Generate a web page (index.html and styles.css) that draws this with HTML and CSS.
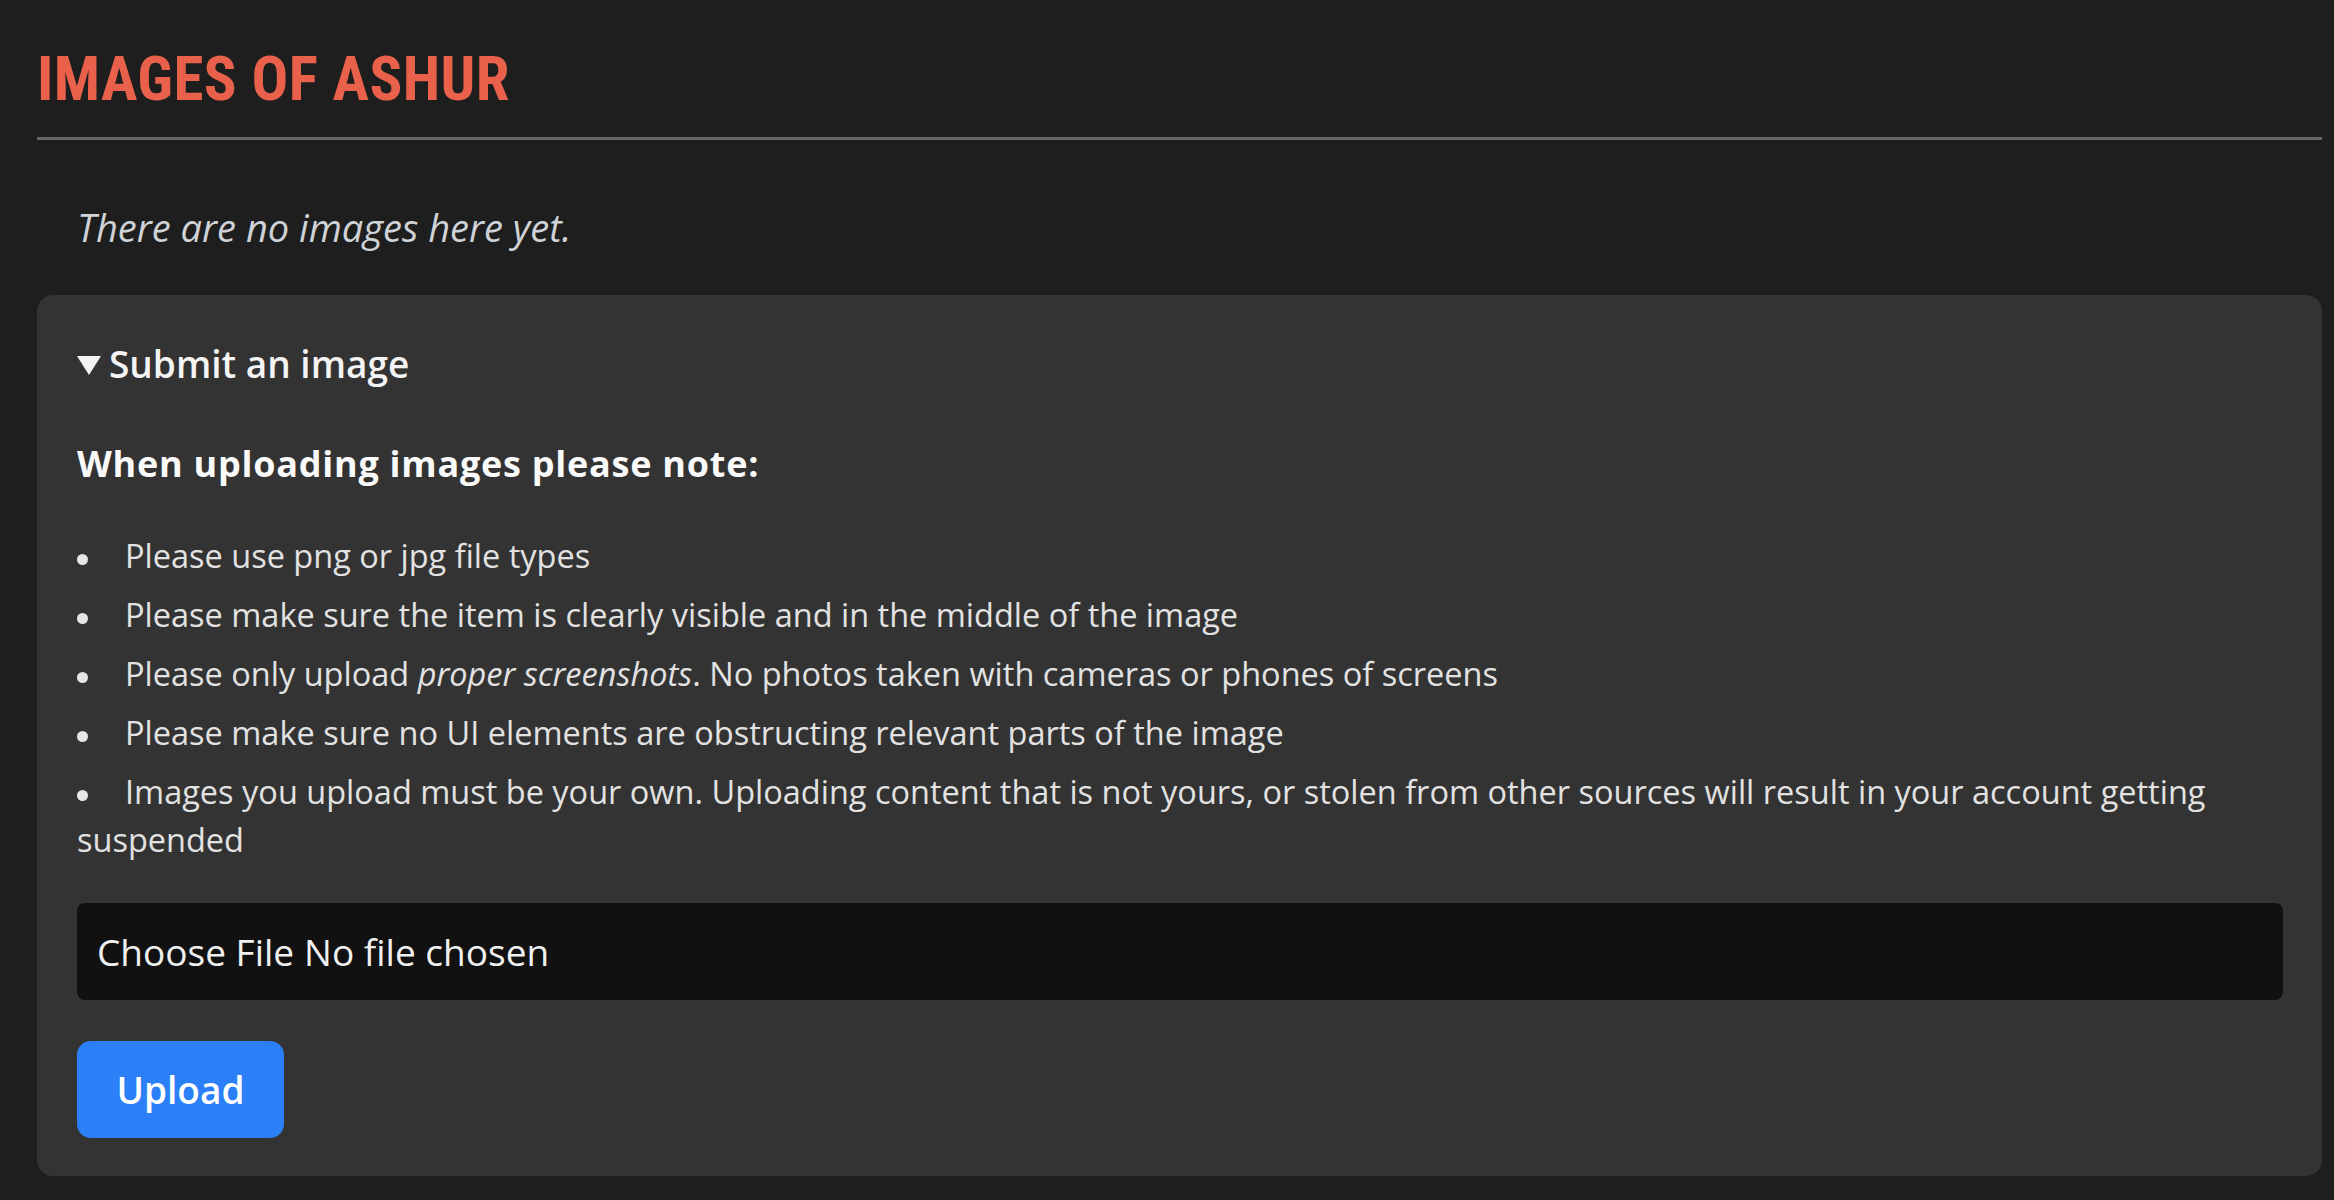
FILE: index.html
```html
<!DOCTYPE html>
<html lang="en">
<head>
<meta charset="utf-8">
<title>Images of Ashur</title>
<link rel="stylesheet" href="styles.css">
</head>
<body>
<main class="page">
  <h1 class="title">IMAGES OF ASHUR</h1>
  <hr class="rule">
  <p class="empty">There are no images here yet.</p>
  <details class="panel" open>
    <summary class="summary"><span class="caret"></span>Submit an image</summary>
    <h4 class="note-title">When uploading images please note:</h4>
    <ul class="notes">
      <li>Please use png or jpg file types</li>
      <li>Please make sure the item is clearly visible and in the middle of the image</li>
      <li>Please only upload <em>proper screenshots</em>. No photos taken with cameras or phones of screens</li>
      <li>Please make sure no UI elements are obstructing relevant parts of the image</li>
      <li>Images you upload must be your own. Uploading content that is not yours, or stolen from other sources will result in your account getting suspended</li>
    </ul>
    <form class="upload-form">
      <label class="file"><span class="file-btn">Choose File</span> <span class="file-name">No file chosen</span></label>
      <button type="button" class="btn">Upload</button>
    </form>
  </details>
</main>
</body>
</html>
```
FILE: styles.css
```css
html, body {
  margin: 0;
  padding: 0;
  background: #1e1e1e;
}
body {
  font-family: "Open Sans", "Noto Sans", "Liberation Sans", sans-serif;
  color: #dedede;
}
.page {
  margin-left: 37px;
  width: 2285px;
  padding-top: 44px;
  padding-bottom: 24px;
}
.title {
  margin: 0;
  font-family: "Roboto Condensed", "DejaVu Sans Condensed", Roboto, sans-serif;
  font-stretch: condensed;
  font-weight: 700;
  font-size: 61px;
  line-height: 71px;
  color: #e9614b;
  letter-spacing: 0.4px;
}
.rule {
  margin: 22px 0 0;
  border: 0;
  height: 3px;
  background: #666;
}
.empty {
  margin: 60px 0 0;
  padding-left: 40px;
  font-style: italic;
  font-size: 38px;
  line-height: 54px;
  color: #cfd2d6;
}
.panel {
  margin-top: 41px;
  background: #333333;
  border-radius: 16px;
  padding: 42px 39px 38px 40px;
}
.summary {
  list-style: none;
  display: flex;
  align-items: center;
  font-size: 37px;
  font-weight: 600;
  line-height: 54px;
  color: #f4f4f4;
  cursor: pointer;
}
.summary::-webkit-details-marker { display: none; }
.caret {
  width: 0;
  height: 0;
  border-left: 12px solid transparent;
  border-right: 12px solid transparent;
  border-top: 19px solid #f4f4f4;
  margin-right: 8px;
  margin-top: 2px;
}
.note-title {
  margin: 49px 0 0;
  font-size: 36px;
  font-weight: 700;
  line-height: 48px;
  letter-spacing: 0.75px;
  color: #fafafa;
}
.notes {
  margin: 44px 0 0;
  padding: 0;
  list-style: none;
  font-size: 32.5px;
  line-height: 48px;
  color: #e2e2e2;
}
.notes li + li { margin-top: 11px; }
.notes li::before {
  content: "";
  display: inline-block;
  width: 11px;
  height: 11px;
  border-radius: 50%;
  background: #e6e6e6;
  margin: 0 37px 0 0;
  vertical-align: middle;
}
.upload-form {
  margin-top: 39px;
  display: flex;
  flex-direction: column;
  align-items: flex-start;
  gap: 41px;
}
.file {
  box-sizing: border-box;
  align-self: stretch;
  height: 97px;
  display: flex;
  align-items: center;
  gap: 10px;
  padding-left: 20px;
  background: #111111;
  border-radius: 8px;
  font-size: 37px;
  color: #f0f0f0;
}
.btn {
  box-sizing: border-box;
  height: 97px;
  width: 207px;
  border: 0;
  border-radius: 14px;
  background: #2b80f7;
  color: #ffffff;
  font-family: inherit;
  font-size: 37px;
  font-weight: 600;
  padding: 0;
  cursor: pointer;
}
```
